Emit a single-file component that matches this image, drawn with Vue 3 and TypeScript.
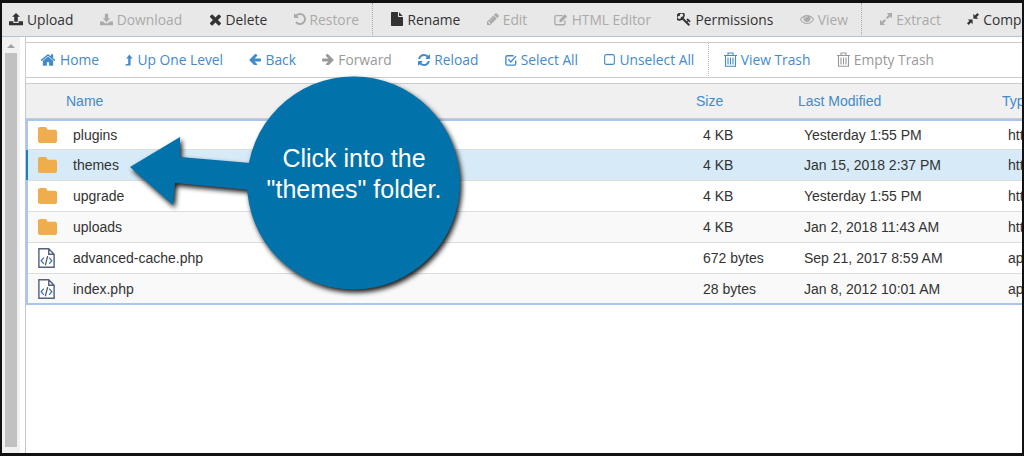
<script setup lang="ts">
interface Icon { vb: string; w: number; h: number; d: string; stroke?: string; sw?: number }
interface Tool { label: string; icon: string; off?: boolean; divider?: boolean }

const icons: Record<string, Icon> = {
  upload: { vb: '0 0 16 16', w: 14, h: 14, d: 'M0 10.500h5v2h6v-2h5V15H0zM8 1l4.500 4.500H10V11H6V5.500H3.500z' },
  download: { vb: '0 0 16 16', w: 13, h: 13, d: 'M0 10.500h4l2 2h4l2-2h4V15H0zM6 1h4v5.500h2.500L8 11.500 3.500 6.500H6z' },
  times: { vb: '200 200 1400 1400', w: 13, h: 13, d: 'M1490 1322q0 40-28 68l-136 136q-28 28-68 28t-68-28l-294-294-294 294q-28 28-68 28t-68-28l-136-136q-28-28-28-68t28-68l294-294-294-294q-28-28-28-68t28-68l136-136q28-28 68-28t68 28l294 294 294-294q28-28 68-28t68 28l136 136q28 28 28 68t-28 68l-294 294 294 294q28 28 28 68z' },
  undo: { vb: '128 128 1536 1536', w: 12, h: 12, d: 'M1664 896q0 156-61 298t-164 245-245 164-298 61q-172 0-327-72.500t-264-204.500q-7-10-6.500-22.500t8.500-20.500l137-138q10-9 25-9 16 2 23 12 73 95 179 147t225 52q104 0 198.500-40.500t163.500-109.500 109.500-163.500 40.500-198.500-40.500-198.500-109.500-163.500-163.500-109.500-198.500-40.500q-98 0-188 35.500t-160 101.500l137 138q31 30 14 69-17 40-59 40h-448q-26 0-45-19t-19-45v-448q0-42 40-59 39-17 69 14l130 129q107-101 244.500-156.500t284.500-55.500q156 0 298 61t245 164 164 245 61 298z' },
  file: { vb: '128 0 1536 1792', w: 12, h: 14, d: 'M1152 512v-472q22 14 36 28l408 408q14 14 28 36h-472zm-128 32q0 40 28 68t68 28h544v1056q0 40-28 68t-68 28h-1344q-40 0-68-28t-28-68v-1600q0-40 28-68t68-28h800v544z' },
  pencil: { vb: '128 128 1536 1536', w: 12, h: 12, d: 'M491 1536l91-91-235-235-91 91v107h128v128h107zm523-928q0-22-22-22-10 0-17 7l-542 542q-7 7-7 17 0 22 22 22 10 0 17-7l542-542q7-7 7-17zm-54-192l416 416-832 832h-416v-416zm683 96q0 53-37 90l-166 166-416-416 166-165q36-38 90-38 53 0 91 38l235 234q37 39 37 91z' },
  editsq: { vb: '0 0 16 14', w: 14, h: 13, d: 'M12.500 8v3.200q0 1.800-1.800 1.800H2.800Q1 13 1 11.200V4.300q0-1.800 1.800-1.800H10', stroke: 'stroke', sw: 1.500 },
  key: { vb: '128 256 1600 1500', w: 14, h: 13, d: 'M832 512q0-80-56-136t-136-56-136 56-56 136q0 42 19 83-41-19-83-19-80 0-136 56t-56 136 56 136 136 56 136-56 56-136q0-42-19-83 41 19 83 19 80 0 136-56t56-136zm851 704q0 17-49 66t-66 49q-9 0-28.500-16t-36.500-33-38.500-40-24.500-26l-96 96 220 220q28 28 28 68 0 42-39 81t-81 39q-40 0-68-28l-671-671q-176 131-365 131-163 0-265.500-102.500t-102.500-265.500q0-160 95-313t248-248 313-95q163 0 265.500 102.500t102.500 265.500q0 189-131 365l355 355 96-96q-3-3-26-24.500t-40-38.500-33-36.500-16-28.500q0-17 49-66t66-49q13 0 23 10 6 6 46 44.500t82 79.500 86.500 86 73 78 28.500 41z' },
  eye: { vb: '0 256 1792 1280', w: 14, h: 10, d: 'M1664 960q-152-236-381-353 61 104 61 225 0 185-131.500 316.500t-316.500 131.500-316.500-131.500-131.500-316.500q0-121 61-225-229 117-381 353 133 205 333.500 326.500t434.500 121.500 434.500-121.500 333.500-326.500zm-720-384q0-20-14-34t-34-14q-125 0-214.500 89.500t-89.500 214.500q0 20 14 34t34 14 34-14 14-34q0-86 61-147t147-61q20 0 34-14t14-34zm848 384q0 34-20 69-140 230-376.500 368.500t-499.500 138.500-499.500-139-376.500-368q-20-35-20-69t20-69q140-229 376.500-368t499.500-139 499.500 139 376.500 368q20 35 20 69z' },
  expand: { vb: '0 0 16 16', w: 12, h: 12, d: 'M9 0h7v7l-2.500-2.500L10 8 8 6l3.500-3.500zM7 16H0V9l2.500 2.500L6 8l2 2-3.500 3.500z' },
  compress: { vb: '0 0 16 16', w: 12, h: 12, d: 'M8.500 7.500V1l2.200 2.200L13.800 0 16 2.200l-3.200 3.100L15 7.500zM7.500 8.500V15l-2.200-2.200L2.200 16 0 13.800l3.200-3.100L1 8.500z' },
  home: { vb: '0 128 1792 1536', w: 16, h: 14, d: 'M1472 992v480q0 26-19 45t-45 19h-384v-384h-256v384h-384q-26 0-45-19t-19-45v-480q0-1 .5-3t.5-3l575-474 575 474q1 2 1 6zm223-69l-62 74q-8 9-21 11h-3q-13 0-21-7l-692-577-692 577q-12 8-24 7-13-2-21-11l-62-74q-8-10-7-23.500t11-21.500l719-599q32-26 76-26t76 26l244 204v-195q0-14 9-23t23-9h192q14 0 23 9t9 23v408l219 182q10 8 11 21.500t-7 23.500z' },
  levelup: { vb: '0 0 10 14', w: 8, h: 12, d: 'M5.500 0l4 5H7v7.500q0 1.500-1.500 1.500H0l1.500-2H4V5H1.500z' },
  left: { vb: '128 256 1536 1280', w: 12, h: 11, d: 'M1664 896v128q0 53-32.500 90.500t-84.500 37.500h-704l293 294q38 36 38 90t-38 90l-75 76q-37 37-90 37-52 0-91-37l-651-652q-37-37-37-90 0-52 37-91l651-650q38-38 91-38 52 0 90 38l75 74q38 38 38 91t-38 91l-293 293h704q52 0 84.500 37.500t32.500 90.500z' },
  right: { vb: '128 256 1536 1280', w: 12, h: 11, d: 'M1600 960q0 54-37 91l-651 651q-39 37-91 37-51 0-90-37l-75-75q-38-38-38-91t38-91l293-293h-704q-52 0-84.500-37.500t-32.500-90.500v-128q0-53 32.500-90.500t84.500-37.500h704l-293-294q-38-36-38-90t38-90l75-75q38-38 90-38 53 0 91 38l651 651q37 35 37 90z' },
  reload: { vb: '128 128 1536 1536', w: 12, h: 12, d: 'M1639 1056q0 5-1 7-64 268-268 434.500t-478 166.500q-146 0-282.500-55t-243.500-157l-129 129q-19 19-45 19t-45-19-19-45v-448q0-26 19-45t45-19h448q26 0 45 19t19 45-19 45l-137 137q71 66 161 102t187 36q134 0 250-65t186-179q11-17 53-117 8-23 30-23h192q13 0 22.500 9.500t9.500 22.500zm25-800v448q0 26-19 45t-45 19h-448q-26 0-45-19t-19-45 19-45l138-138q-148-137-349-137-134 0-250 65t-186 179q-11 17-53 117-8 23-30 23h-199q-13 0-22.500-9.500t-9.500-22.500v-7q65-268 270-434.500t480-166.500q146 0 284 55.500t245 156.500l130-129q19-19 45-19t45 19 19 45z' },
  checksq: { vb: '0 0 14 14', w: 12, h: 12, d: 'M12.500 7.500v4q0 1.500-1.500 1.500H2.500Q1 13 1 11.500v-8Q1 2 2.500 2H10M3.800 6.200l3 3 6-6.700', stroke: 'stroke', sw: 1.600 },
  square: { vb: '0 0 12 12', w: 11, h: 11, d: 'M2.500.7h7q1.800 0 1.800 1.800v7q0 1.800-1.800 1.800h-7Q.7 11.300.7 9.500v-7Q.7.700 2.500.7z', stroke: 'stroke', sw: 1.200 },
  trash: { vb: '0 0 13 15', w: 13, h: 15, d: 'M0 3.500h13M4 3.500V1h5v2.500M1.500 3.500v10.800h10V3.500M4 5.500v7M6.500 5.500v7M9 5.500v7', stroke: 'stroke', sw: 1.100 },
}

const topTools: Tool[] = [
  { label: 'Upload', icon: 'upload' },
  { label: 'Download', icon: 'download', off: true },
  { label: 'Delete', icon: 'times' },
  { label: 'Restore', icon: 'undo', off: true, divider: true },
  { label: 'Rename', icon: 'file' },
  { label: 'Edit', icon: 'pencil', off: true },
  { label: 'HTML Editor', icon: 'editsq', off: true },
  { label: 'Permissions', icon: 'key' },
  { label: 'View', icon: 'eye', off: true, divider: true },
  { label: 'Extract', icon: 'expand', off: true },
  { label: 'Compress', icon: 'compress' },
]

const navTools: Tool[] = [
  { label: 'Home', icon: 'home' },
  { label: 'Up One Level', icon: 'levelup' },
  { label: 'Back', icon: 'left' },
  { label: 'Forward', icon: 'right', off: true },
  { label: 'Reload', icon: 'reload' },
  { label: 'Select All', icon: 'checksq' },
  { label: 'Unselect All', icon: 'square', divider: true },
  { label: 'View Trash', icon: 'trash' },
  { label: 'Empty Trash', icon: 'trash', off: true },
]

const files = [
  { name: 'plugins', folder: true, size: '4 KB', date: 'Yesterday 1:55 PM', type: 'httpd/unix-directory' },
  { name: 'themes', folder: true, size: '4 KB', date: 'Jan 15, 2018 2:37 PM', type: 'httpd/unix-directory', sel: true },
  { name: 'upgrade', folder: true, size: '4 KB', date: 'Yesterday 1:55 PM', type: 'httpd/unix-directory' },
  { name: 'uploads', folder: true, size: '4 KB', date: 'Jan 2, 2018 11:43 AM', type: 'httpd/unix-directory', alt: true },
  { name: 'advanced-cache.php', folder: false, size: '672 bytes', date: 'Sep 21, 2017 8:59 AM', type: 'application/x-httpd-php' },
  { name: 'index.php', folder: false, size: '28 bytes', date: 'Jan 8, 2012 10:01 AM', type: 'application/x-httpd-php', alt: true },
]
</script>

<template>
  <div class="screen">
    <div class="toolbar top">
      <template v-for="t in topTools" :key="t.label">
        <span class="tool" :class="{ off: t.off }">
          <svg class="ico" :width="icons[t.icon].w" :height="icons[t.icon].h" :viewBox="icons[t.icon].vb">
            <path v-if="icons[t.icon].stroke" :d="icons[t.icon].d" fill="none" stroke="currentColor" :stroke-width="icons[t.icon].sw" />
            <path v-else :d="icons[t.icon].d" fill="currentColor" />
            <path v-if="t.icon === 'editsq'" d="M6 10l.5-3L12.500 1 15 3.500 9 9.500z" fill="currentColor" />
          </svg>
          {{ t.label }}
        </span>
        <span v-if="t.divider" class="divider"></span>
      </template>
    </div>

    <div class="body">
      <div class="track">
        <span class="up"></span>
        <span class="thumb"></span>
      </div>
      <div class="panel">
        <div class="toolbar nav">
          <template v-for="t in navTools" :key="t.label + t.off">
            <span class="tool" :class="{ off: t.off }">
              <svg class="ico" :width="icons[t.icon].w" :height="icons[t.icon].h" :viewBox="icons[t.icon].vb">
                <path v-if="icons[t.icon].stroke" :d="icons[t.icon].d" fill="none" stroke="currentColor" :stroke-width="icons[t.icon].sw" />
                <path v-else :d="icons[t.icon].d" fill="currentColor" />
              </svg>
              {{ t.label }}
            </span>
            <span v-if="t.divider" class="divider"></span>
          </template>
        </div>

        <div class="head">
          <span class="hname">Name</span>
          <span>Size</span>
          <span class="hmod">Last Modified</span>
          <span class="hmod">Type</span>
        </div>

        <div class="rows">
          <div v-for="f in files" :key="f.name" class="row" :class="{ sel: f.sel, alt: f.alt }">
            <span class="name">
              <span class="fslot">
                <svg v-if="f.folder" width="19" height="16" viewBox="0 0 19 17" preserveAspectRatio="none">
                  <path d="M2 0h5q1.500 0 2 1.500L9.500 3H17q2 0 2 2v10q0 2-2 2H2q-2 0-2-2V2q0-2 2-2z" fill="#f0ad4e" />
                </svg>
                <svg v-else width="17" height="20" viewBox="0 0 19 22" preserveAspectRatio="none">
                  <path d="M1 .8h11l6 6v14.400H1zM12 .8v6h6" fill="#fff" stroke="#56617f" stroke-width="1.600" />
                  <path d="M6.500 10.500l-3 3.500 3 3.500M12.500 10.500l3 3.500-3 3.500" fill="none" stroke="#3b78b4" stroke-width="1.400" />
                  <path d="M10.800 9l-2.600 10" fill="none" stroke="#4a4a55" stroke-width="1.300" />
                </svg>
              </span>
              {{ f.name }}
            </span>
            <span class="cell">{{ f.size }}</span>
            <span class="cell">{{ f.date }}</span>
            <span class="cell">{{ f.type }}</span>
          </div>
        </div>
      </div>
    </div>

    <div class="callout">
      <svg width="1024" height="456" viewBox="0 0 1024 456">
        <g class="blue">
          <path d="M130 167L180 137L180 157L250 163L250 190L175 183L173 205Z" />
          <circle cx="353.500" cy="183" r="106.500" />
        </g>
      </svg>
      <p class="say">Click into the<br />"themes" folder.</p>
    </div>
  </div>
</template>

<style>
html, body { margin: 0; padding: 0; background: #fff; }
</style>

<style scoped>
.screen {
  position: relative;
  box-sizing: border-box;
  width: 1024px;
  height: 456px;
  border: solid #111;
  border-width: 3px 2px 3px 2px;
  overflow: hidden;
  background: #fff;
  display: flex;
  flex-direction: column;
  font-family: "Open Sans", sans-serif;
  font-size: 13.8px;
}
.toolbar {
  display: flex;
  align-items: center;
  white-space: nowrap;
  flex: none;
}
.top {
  height: 32px;
  padding-bottom: 1px;
  background: #e8e8e8;
  border-bottom: 1px solid #b9c3cd;
  padding-left: 7px;
  color: #333;
}
.tool {
  display: inline-flex;
  align-items: center;
  gap: 4px;
  margin-right: 26.4px;
}
.ico { flex: none; display: block; }
.off { color: #aaa; }
.divider {
  align-self: stretch;
  width: 0;
  border-left: 1px dotted #aaa;
  margin-left: -13px;
  margin-right: 18px;
}
.body {
  flex: 1;
  display: flex;
  min-height: 0;
}
.track {
  width: 18px;
  flex: none;
  background: #f1f1f1;
  display: flex;
  flex-direction: column;
  align-items: center;
  padding-top: 7px;
  padding-bottom: 6px;
  box-sizing: border-box;
}
.up {
  width: 0;
  height: 0;
  border: 4px solid transparent;
  border-top: 0;
  border-bottom: 4px solid #a3a3a3;
}
.thumb {
  margin-top: 5px;
  flex: 1;
  width: 12px;
  background: #c1c1c1;
}
.panel {
  flex: 1;
  min-width: 0;
  margin-left: 5px;
  padding-top: 5px;
  border-left: 1px solid #c8c8c8;
}
.nav {
  height: 33px;
  padding-bottom: 1px;
  margin-left: -1px;
  border: solid #ccc;
  border-width: 1px 0 1px 1px;
  padding-left: 14px;
  color: #428bca;
}
.nav .off { color: #999; }
.nav .divider { border-left-color: #bbb; margin-right: 15px; margin-left: -13px; }
.head {
  margin-top: 5px;
  height: 36px;
  box-sizing: border-box;
  background: #f0f0f0;
  border-top: 1px solid #ccc;
  border-bottom: 1px solid #ccc;
  display: grid;
  grid-template-columns: 670px 101px 204px 300px;
  align-items: center;
  color: #428bca;
  font-family: "Liberation Sans", Arial, sans-serif;
  font-size: 14px;
  white-space: nowrap;
}
.hname { padding-left: 40px; }
.hmod { padding-left: 1px; }
.rows {
  box-sizing: border-box;
  border-top: 2px solid #a9c6f0;
  border-bottom: 2px solid #a9c6f0;
  border-left: 2px solid #a9c6f0;
  font-family: "Liberation Sans", Arial, sans-serif;
  font-size: 14px;
  color: #333;
}
.row {
  height: 31px;
  box-sizing: border-box;
  display: grid;
  grid-template-columns: 668px 101px 204px 300px;
  align-items: center;
  border-bottom: 1px solid #ddd;
  white-space: nowrap;
}
.row:first-child { height: 29px; padding-bottom: 1px; }
.row:last-child { border-bottom: 0; height: 29px; }
.row.alt { background: #f9f9f9; }
.row.sel { background: #d6eaf8; position: relative; }
.row.sel::before {
  content: "";
  position: absolute;
  left: -2px;
  top: 0;
  bottom: 0;
  width: 2px;
  background: #1b7fc4;
}
.name {
  display: flex;
  align-items: center;
  padding-left: 10px;
}
.fslot {
  flex: none;
  width: 35px;
  display: flex;
  align-items: center;
}
.fslot svg { display: block; }
.cell { padding-left: 7px; }
.callout {
  position: absolute;
  left: -2px;
  top: -3px;
  width: 1024px;
  height: 456px;
  pointer-events: none;
}
.callout svg { display: block; }
.blue {
  fill: #0272aa;
  filter: drop-shadow(2px 3px 2.500px rgba(0, 0, 0, 0.9));
}
.say {
  position: absolute;
  left: 254px;
  top: 143px;
  width: 200px;
  margin: 0;
  text-align: center;
  color: #fff;
  font-family: "Liberation Sans", Arial, sans-serif;
  font-size: 25px;
  line-height: 31px;
}
</style>
